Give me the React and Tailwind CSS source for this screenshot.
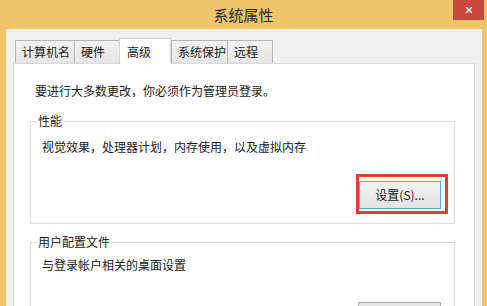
import { X } from "lucide-react";

const font = { fontFamily: '"Noto Sans CJK SC", "Noto Sans", sans-serif' };

const tabs = [
  { label: "计算机名", w: "w-[60px]" },
  { label: "硬件", w: "w-[46px]" },
  { label: "高级", w: "w-[52px]", active: true },
  { label: "系统保护", w: "w-[57px]" },
  { label: "远程", w: "w-[46px]" },
];

function Tab({ label, w, active }) {
  if (active) {
    return (
      <div
        className={`${w} relative z-10 -mb-px flex h-[26px] items-center border border-b-0 border-[#d4d4d4] bg-white pl-[7px] text-[12px] leading-[16px] text-[#1a1a1a]`}
      >
        {label}
      </div>
    );
  }
  return (
    <div
      className={`${w} -mr-px flex h-[23px] items-center border border-b-0 border-[#b4b4b4] bg-gradient-to-b from-[#f2f2f2] to-[#e6e6e6] pl-[6px] text-[12px] leading-[16px] text-[#1a1a1a]`}
    >
      {label}
    </div>
  );
}

function WinButton({ children }) {
  return (
    <div className="flex h-[28px] w-[82px] items-center justify-center border border-[#6aa3d6] bg-gradient-to-b from-[#f4f4f4] to-[#e3e3e3] text-[12px] leading-[16px] text-[#1a1a1a]">
      {children}
    </div>
  );
}

export default function App() {
  return (
    <div
      className="flex h-[306px] w-[487px] flex-col overflow-hidden bg-[#efc46a]"
      style={font}
    >
      {/* TITLE BAR */}
      <div className="relative flex h-[29px] shrink-0 items-center justify-center">
        <span className="text-[15px] leading-[20px] text-[#2a2a2a]">系统属性</span>
        <div className="absolute right-[3px] top-0 flex h-[20px] w-[31px] items-center justify-center bg-[#c9473f]">
          <X className="h-[10px] w-[10px] text-white" strokeWidth={3} />
        </div>
      </div>

      {/* BODY */}
      <div className="ml-[6px] mr-[5px] flex flex-1 flex-col bg-[#f0f0f0] px-[7px] pt-[9px]">
        {/* TABS */}
        <div className="flex h-[25px] items-end pl-[2px]">
          {tabs.map((t) => (
            <Tab key={t.label} {...t} />
          ))}
        </div>

        {/* PANEL */}
        <div className="flex-1 border border-[#d9d9d9] bg-white pt-[19px] text-[12px] leading-[16px] text-[#1a1a1a]">
          <p className="pl-[21px]">要进行大多数更改，你必须作为管理员登录。</p>

          <fieldset className="ml-[16px] mr-[19px] mt-[14px] border border-[#dcdcdc] pb-[9px]">
            <legend className="ml-[6px] px-[1px]">性能</legend>
            <p className="mt-[10px] pl-[11px]">视觉效果，处理器计划，内存使用，以及虚拟内存</p>
            <div className="mt-[19px] flex justify-end pr-[6px]">
              <div className="border-[3px] border-[#d9403a] pb-[2px] pr-[4px] pt-[4px]">
                <WinButton>设置(S)...</WinButton>
              </div>
            </div>
          </fieldset>

          <fieldset className="ml-[16px] mr-[19px] mt-[10px] border border-[#dcdcdc] pb-[9px]">
            <legend className="ml-[6px] px-[1px]">用户配置文件</legend>
            <p className="mt-[7px] pl-[11px]">与登录帐户相关的桌面设置</p>
            <div className="mt-[29px] flex justify-end pr-[13px]">
              <div className="h-[28px] w-[83px] border border-[#adadad] bg-[#e5e5e5]" />
            </div>
          </fieldset>
        </div>
      </div>
    </div>
  );
}
